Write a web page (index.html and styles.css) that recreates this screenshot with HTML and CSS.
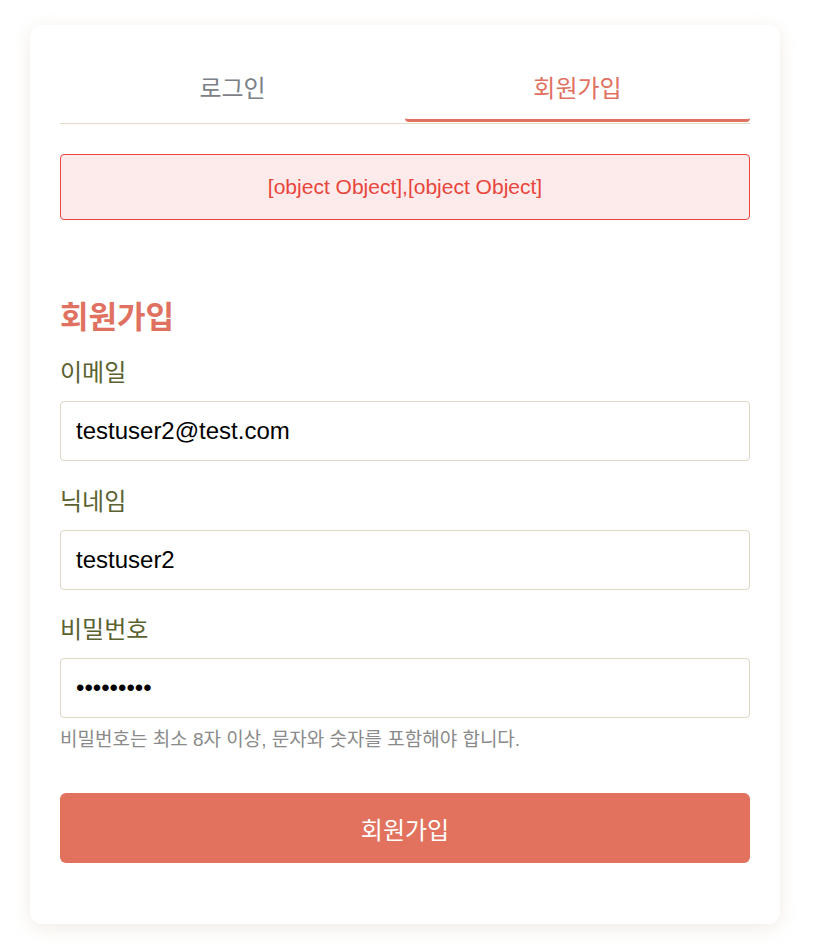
FILE: index.html
```html
<!DOCTYPE html>
<html lang="ko">
<head>
<meta charset="utf-8">
<title>회원가입</title>
<link rel="stylesheet" href="styles.css">
</head>
<body>
<div class="card">
  <div class="tabs">
    <button class="tab">로그인</button>
    <button class="tab active">회원가입</button>
  </div>
  <div class="error">[object Object],[object Object]</div>
  <form class="form">
    <h2 class="title">회원가입</h2>
    <div class="field">
      <label class="label">이메일</label>
      <input class="input" type="email" value="testuser2@test.com">
    </div>
    <div class="field">
      <label class="label">닉네임</label>
      <input class="input" type="text" value="testuser2">
    </div>
    <div class="field">
      <label class="label">비밀번호</label>
      <input class="input" type="password" value="123456789">
      <p class="hint">비밀번호는 최소 8자 이상, 문자와 숫자를 포함해야 합니다.</p>
    </div>
    <button class="submit" type="button">회원가입</button>
  </form>
</div>
</body>
</html>
```

FILE: styles.css
```css
* { box-sizing: border-box; }
html, body { margin: 0; background: #ffffff; }
body {
  padding: 25px 0 30px 30px;
  font-family: "Liberation Sans", "Noto Sans CJK KR", sans-serif;
}
.card {
  width: 750px;
  background: #fff;
  border-radius: 12px;
  box-shadow: 0 4px 18px rgba(170, 150, 110, 0.18);
  padding: 30px 30px 61px;
}
.tabs {
  display: flex;
  border-bottom: 1px solid #e2dcc8;
}
.tab {
  flex: 1;
  background: none;
  border: none;
  border-bottom: 3px solid transparent;
  border-radius: 4px;
  padding: 20px 0 16px;
  font-family: inherit;
  font-size: 24px;
  line-height: 28px;
  color: #7c8187;
  margin-bottom: 1px;
}
.tab.active {
  color: #e07060;
  border-bottom-color: #e07060;
}
.error {
  margin-top: 30px;
  background: #fdeaea;
  border: 1px solid #e8453c;
  border-radius: 4px;
  padding: 20px;
  text-align: center;
  font-size: 21px;
  line-height: 24px;
  color: #e8453c;
}
.form { margin-top: 80px; }
.title {
  margin: 0 0 22px;
  font-size: 31px;
  line-height: 36px;
  font-weight: 700;
  color: #e07060;
}
.field { margin-bottom: 25.5px; }
.field:last-of-type { margin-bottom: 0; }
.label {
  display: block;
  font-size: 24px;
  line-height: 30px;
  color: #5a6230;
  margin-bottom: 13px;
}
.input {
  display: block;
  width: 100%;
  height: 60px;
  padding: 0 15px;
  border: 1px solid #ddd7c4;
  border-radius: 4px;
  font-family: inherit;
  font-size: 24px;
  color: #000;
  background: #fff;
}
.hint {
  margin: 11px 0 0;
  font-size: 19px;
  line-height: 22px;
  color: #8a8a8a;
}
.submit {
  display: block;
  width: 100%;
  height: 70px;
  margin-top: 42px;
  border: none;
  border-radius: 6px;
  background: #e2725e;
  color: #fff;
  font-family: inherit;
  font-size: 24px;
}
```
